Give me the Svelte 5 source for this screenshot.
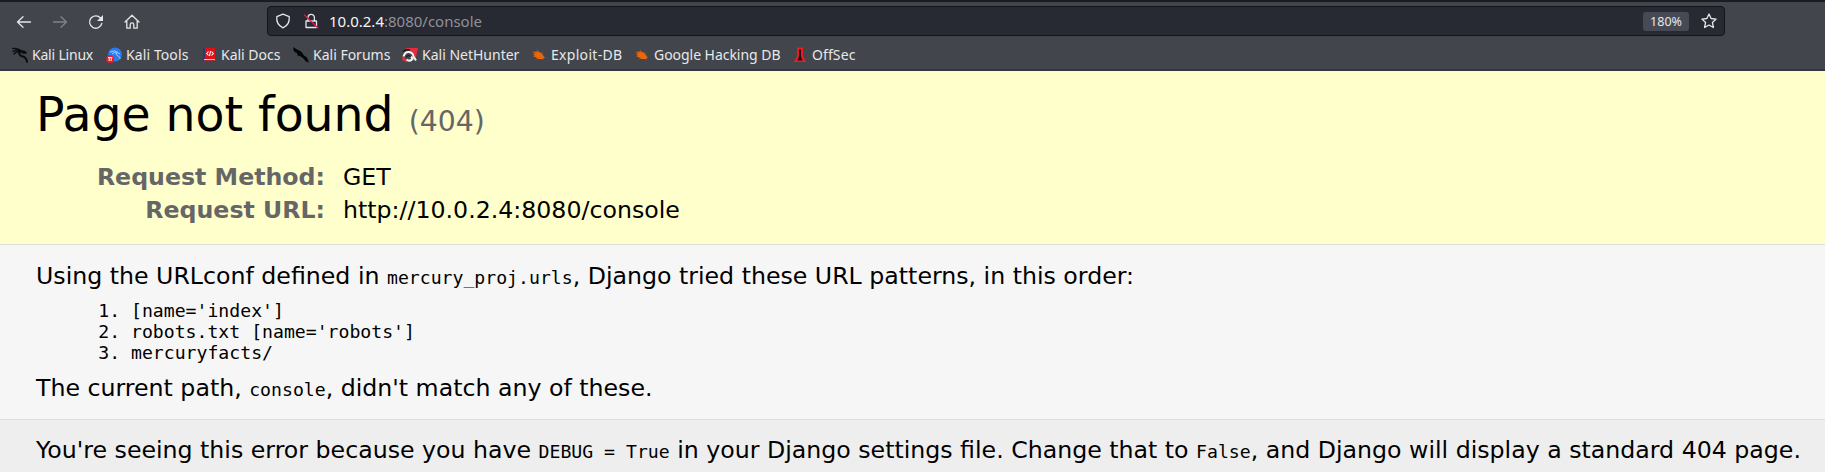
<script>
  const bookmarks = [
    { label: 'Kali Linux', icon: 'dragon', w: 94, ls: -0.2 },
    { label: 'Kali Tools', icon: 'tools', w: 95, ls: 0.1 },
    { label: 'Kali Docs', icon: 'docs', w: 92, ls: -0.02 },
    { label: 'Kali Forums', icon: 'forums', w: 109, ls: 0 },
    { label: 'Kali NetHunter', icon: 'nethunter', w: 129, ls: 0 },
    { label: 'Exploit-DB', icon: 'bug', w: 103, ls: 0.3 },
    { label: 'Google Hacking DB', icon: 'bug', w: 158, ls: -0.04 },
    { label: 'OffSec', icon: 'offsec', w: 80, ls: 0.1 }
  ];
  const patterns = ["[name='index']", "robots.txt [name='robots']", 'mercuryfacts/'];
</script>

<header>
  <nav class="toolbar">
    <div class="buttons">
      <svg viewBox="0 0 16 16"><path d="M14.500 8H1.500M7 2.800 1.500 8 7 13.200" /></svg>
      <svg class="dim" viewBox="0 0 16 16"><path d="M1.500 8h13M9 2.800 14.500 8 9 13.200" /></svg>
      <svg viewBox="0 0 16 16"><path d="M13.800 9.500A6.200 6.200 0 1 1 12.500 4" /><path class="solid" d="M15 1v6H9z" /></svg>
      <svg viewBox="0 0 16 16"><path d="M1 8 8 1.300 15 8M2.800 7v7.200h3.400v-3.500a1.800 1.800 0 0 1 3.600 0v3.500h3.400V7" /></svg>
    </div>
    <div class="address">
      <svg viewBox="0 0 16 16"><path d="M8 1.200 14.200 3.700c.5 5-1.700 9-6.200 11.100C3.500 12.700 1.300 8.700 1.800 3.700z" /></svg>
      <svg class="lock" viewBox="0 0 16 16"><path d="M3 8h10.500v6.500H3zM5 8V4.500a3.200 3.200 0 0 1 6.400 0V8" /><path class="slash" d="m1.500 2 13.500 13" /></svg>
      <span class="url"><b>10.0.2.4</b>:8080/console</span>
      <span class="zoom">180%</span>
      <svg viewBox="0 0 16 16"><path d="m8 1 2.100 4.500 5 .6-3.700 3.400 1 5L8 12l-4.400 2.500 1-5L.9 6.100l5-.6z" /></svg>
    </div>
  </nav>
  <nav class="bookmarks">
    {#each bookmarks as b}
      <span class="bookmark" style="width: {b.w}px; letter-spacing: {b.ls}px">
        <svg viewBox="0 0 16 16">
          {#if b.icon === 'dragon'}
            <g fill="none" stroke="#0c0c0e" stroke-linecap="round" stroke-linejoin="round">
              <path d="M.8 1.500q5-.8 8.500 2.200M1 4.500Q5 2 8.500 4.500M2 7q2-3 6-2" stroke-width="1.400" />
              <path d="M8 4.500q4-1.500 6 1.500l-4-.3" stroke-width="1.600" />
              <path d="M8 4.500Q6 8 10 9.300q4.500 1 5 5.500" stroke-width="2" />
            </g>
          {:else if b.icon === 'tools'}
            <circle cx="9" cy="7.500" r="6.900" fill="#287cf0" />
            <path d="M4 5q5-2.500 8 .5M6 7q2-2 4.500-1.200Q9.500 8 12 9q2 .6 2.200 3M11 5.500l3 1.500" fill="none" stroke="#a5cbff" stroke-width="1" />
            <circle cx="4.200" cy="12" r="4" fill="#e3202b" />
            <path d="M2 10.500h4.400M3.200 10.500V14M5.200 10.500V14" stroke="#fff" />
          {:else if b.icon === 'docs'}
            <path fill="#263b74" d="M2 1h2v13H2z" /><path fill="#df1118" d="M4 1h10v11H4z" />
            <path fill="#d7c6ca" d="M3 12h11v1.300H3z" /><path fill="#bd1018" d="M2 13.300h12V15H2z" />
            <path d="M7.500 4.500 5.700 6.500l1.800 2M10.500 4.500l1.800 2-1.800 2M9.500 4l-1 5" fill="none" stroke="#fff" stroke-width="1.100" />
          {:else if b.icon === 'forums'}
            <path fill="#050505" d="M0 0 4 2.500l4 2 3 4 3 2 2 5-3-1-3-3.500-4-2.500-1 1-1-3.500-3-1.500z" />
          {:else if b.icon === 'nethunter'}
            <path fill="#e92a3c" d="M3 1h13l-2.500 11L9 4z" />
            <path fill="#e92a3c" d="m.5 9-.2 4 3.700 2h5l-4-2z" />
            <path d="M1.500 9.500Q3 4.500 7 5t4.500 4.500l2.500 4M4.500 12.500q3.500 2.500 6-.5L9 9.500" fill="none" stroke="#f2f2f2" stroke-width="2" />
            <path d="M1 4.500Q4 2 8 3M4.500 10q2-3 4 0" fill="none" stroke="#151515" stroke-width="1.200" />
          {:else if b.icon === 'bug'}
            <path fill="#e9670c" d="m2.500 4 2 1 2-.8 3.500 1.600L12.500 9l1.500 2-1.800.3.3 1.200-2.500-.5-3 0-2.500-2L2 9.500l1.800-1L2 7l1.800-.2z" />
            <path d="m6 2.500 2 3M1.500 5.500l3 1M5 12.500l2-2M11 5.500l1 2" stroke="#a95726" stroke-width=".8" />
          {:else}
            <path fill="#eb1b23" d="M5 .5h6v9l3.500 5.500h-13L5 9.500z" /><path fill="#260c10" d="M7 2.500h2v7l1.500 4h-5L7 9.500z" />
          {/if}
        </svg>
        {b.label}
      </span>
    {/each}
  </nav>
</header>

<section class="summary">
  <h1>Page not found <span>(404)</span></h1>
  <table class="meta">
    <tbody>
      <tr><th>Request Method:</th><td>GET</td></tr>
      <tr><th>Request URL:</th><td>http://10.0.2.4:8080/console</td></tr>
    </tbody>
  </table>
</section>

<section class="info">
  <p>Using the URLconf defined in <code>mercury_proj.urls</code>, Django tried these URL patterns, in this order:</p>
  <ol>
    {#each patterns as p}<li>{p}</li>{/each}
  </ol>
  <p>The current path, <code>console</code>, didn't match any of these.</p>
</section>

<section class="explanation">
  <p>You're seeing this error because you have <code>DEBUG = True</code> in your Django settings file. Change that to <code>False</code>, and Django will display a standard 404 page.</p>
</section>

<style>
  :global(body) { background: #eee; color: #000; font: 23.66px "DejaVu Sans", sans-serif; overflow: hidden; }
  :global(#app) { height: 472px; overflow: hidden; }
  header { box-sizing: border-box; height: 71px; background: #42454c; border-top: 2px solid #1b1c22; border-bottom: 2px solid #36373a; color: #e8e8e8; font-family: "Noto Sans", sans-serif; }
  .toolbar { display: flex; height: 38px; padding-top: 4px; box-sizing: border-box; }
  .buttons { display: flex; align-items: center; gap: 20px; padding-left: 16px; width: 251px; height: 31px; }
  svg { width: 16px; height: 16px; flex: none; }
  .buttons svg, .address svg { fill: none; stroke: #e6e6e8; stroke-width: 1.3; stroke-linejoin: round; stroke-linecap: round; }
  .buttons .dim { stroke: #808286; }
  .buttons .solid { fill: #e6e6e8; stroke: none; }
  .address .slash { stroke: #df1844; }
  .address { box-sizing: border-box; width: 1458px; height: 30px; display: flex; align-items: center; background: #272933; border: 1px solid #14151b; border-radius: 4px; padding: 0 7px; }
  .address .lock { margin-left: 12px; }
  .url { margin-left: 10px; flex: 1; font-size: 15px; line-height: 28px; color: #909198; }
  .url b { font-weight: 400; color: #f5f5f5; }
  .zoom { width: 46px; height: 19px; border-radius: 3px; background: #474a54; font-size: 12.5px; line-height: 20px; text-align: center; margin-right: 12px; }
  .bookmarks { display: flex; height: 29px; padding-left: 12px; align-items: center; }
  .bookmark { display: flex; align-items: center; gap: 4px; font-size: 14px; line-height: 20px; white-space: nowrap; }
  h1, p, ol { margin: 0; }
  section { padding: 18px 36px; }
  .summary { box-sizing: border-box; height: 174px; padding-top: 17px; background: #ffc; border-bottom: 1px solid #ddd; }
  h1 { font-size: 47.3px; font-weight: 400; line-height: 54px; }
  h1 span { font-size: 28.3px; color: #666; }
  .meta { margin-top: 12px; border-collapse: collapse; }
  th { width: 289px; padding: 0 18px 0 0; text-align: right; color: #666; }
  td { padding: 0; }
  th, td { line-height: 33px; }
  .info { box-sizing: border-box; height: 175px; background: #f6f6f6; border-bottom: 1px solid #ddd; }
  .explanation { padding-top: 17px; }
  p { line-height: 27px; white-space: nowrap; }
  code, li { font-family: "DejaVu Sans Mono", monospace; font-size: 18.15px; }
  ol { margin: 9px 0 12px; padding-left: 95px; }
  li { line-height: 21px; }
</style>
